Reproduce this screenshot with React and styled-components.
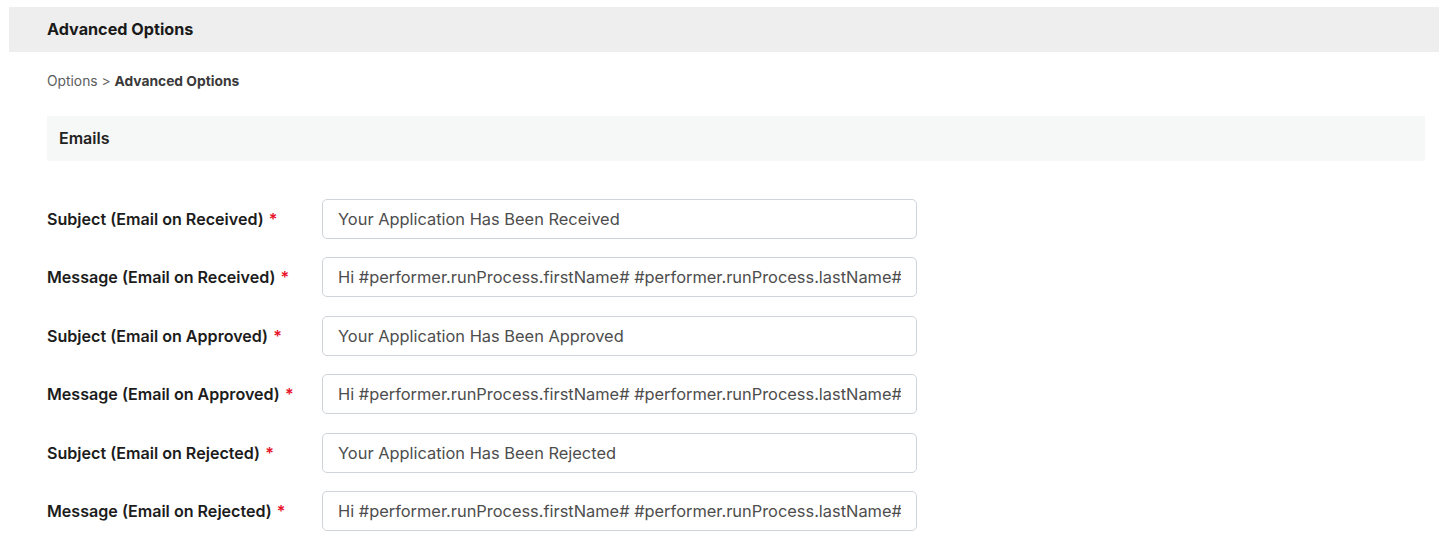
import styled, { createGlobalStyle } from "styled-components";

const GlobalStyle = createGlobalStyle`
  body {
    margin: 0;
    background: #fff;
    font-family: Inter, "Noto Sans", sans-serif;
    color: #1c1c1c;
  }
`;

const fields = [
  { label: "Subject (Email on Received)", value: "Your Application Has Been Received" },
  { label: "Message (Email on Received)", value: "Hi #performer.runProcess.firstName# #performer.runProcess.lastName# ," },
  { label: "Subject (Email on Approved)", value: "Your Application Has Been Approved" },
  { label: "Message (Email on Approved)", value: "Hi #performer.runProcess.firstName# #performer.runProcess.lastName# ," },
  { label: "Subject (Email on Rejected)", value: "Your Application Has Been Rejected" },
  { label: "Message (Email on Rejected)", value: "Hi #performer.runProcess.firstName# #performer.runProcess.lastName# ," },
];

export default function App() {
  return (
    <>
      <GlobalStyle />
      <Page>
        <Header>
          <HeaderTitle>Advanced Options</HeaderTitle>
        </Header>
        <Content>
          <Breadcrumb>
            Options &gt; <strong>Advanced Options</strong>
          </Breadcrumb>
          <Section>
            <SectionTitle>Emails</SectionTitle>
          </Section>
          <Form>
            {fields.map((f) => (
              <Row key={f.label}>
                <Label>
                  {f.label} <Required>*</Required>
                </Label>
                <Input defaultValue={f.value} readOnly />
              </Row>
            ))}
          </Form>
        </Content>
      </Page>
    </>
  );
}

const Page = styled.div`
  padding: 7px 0 0 9px;
`;

const Header = styled.div`
  background: #eeeeee;
  height: 45px;
  box-sizing: border-box;
  padding: 0 0 2px 38px;
  display: flex;
  align-items: center;
`;

const HeaderTitle = styled.h1`
  margin: 0;
  font-size: 16.2px;
  font-weight: 700;
  color: #1a1a1a;
`;

const Content = styled.div`
  padding: 0 14px 0 38px;
`;

const Breadcrumb = styled.div`
  margin-top: 21px;
  height: 17px;
  font-size: 13.8px;
  color: #5c5c5c;
  line-height: 17px;
  strong {
    color: #3a3a3a;
    font-weight: 700;
  }
`;

const Section = styled.div`
  margin-top: 26px;
  background: #f6f7f7;
  height: 45px;
  box-sizing: border-box;
  padding: 0 0 2px 12px;
  display: flex;
  align-items: center;
`;

const SectionTitle = styled.h2`
  margin: 0;
  font-size: 16px;
  font-weight: 600;
  color: #222;
`;

const Form = styled.div`
  margin-top: 38px;
  display: flex;
  flex-direction: column;
  gap: 18.4px;
`;

const Row = styled.div`
  display: flex;
  align-items: center;
`;

const Label = styled.label`
  width: 275px;
  flex-shrink: 0;
  font-size: 16.1px;
  font-weight: 600;
  color: #1c1c1c;
`;

const Required = styled.span`
  color: #e8132a;
  margin-left: 1px;
`;

const Input = styled.input`
  width: 595px;
  height: 40px;
  box-sizing: border-box;
  border: 1px solid #cfd4da;
  border-radius: 5px;
  padding: 0 15px;
  font-family: Inter, "Noto Sans", sans-serif;
  font-size: 16.4px;
  color: #4d4d4d;
  background: #fff;
  outline: none;
`;
